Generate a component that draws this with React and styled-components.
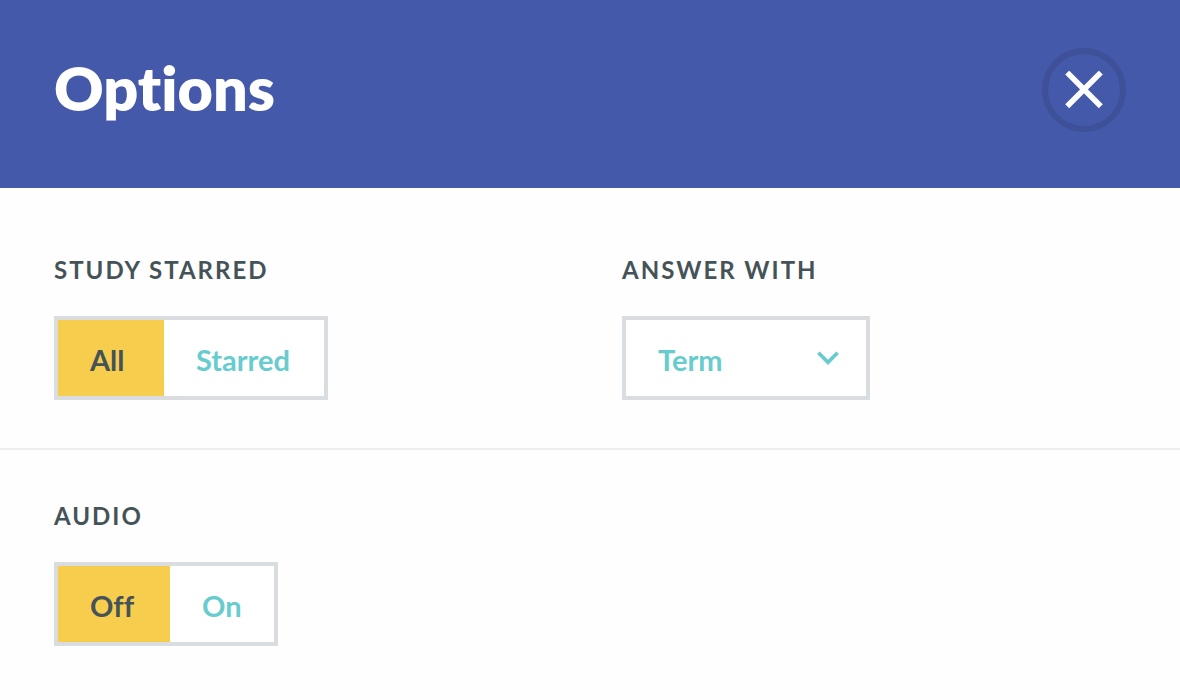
import React, { useState } from "react";
import styled, { createGlobalStyle } from "styled-components";

const GlobalStyle = createGlobalStyle`
  *, *::before, *::after { box-sizing: border-box; }
  body {
    margin: 0;
    background: #fefefe;
    color: #455358;
    font-family: Lato, "Open Sans", sans-serif;
    font-variant-ligatures: none;
  }
`;

const Header = styled.header`
  display: flex;
  align-items: center;
  justify-content: space-between;
  padding: 48px 54px 56px;
  background: #4459a9;
`;

const Title = styled.h1`
  margin: 0;
  color: #fff;
  font-size: 61px;
  font-weight: 800;
  line-height: 80px;
  padding-bottom: 4px;
`;

const CloseButton = styled.button`
  display: flex;
  align-items: center;
  justify-content: center;
  width: 84px;
  height: 84px;
  padding: 0;
  border: 6px solid #3e5098;
  border-radius: 50%;
  background: transparent;
  color: #fff;
  cursor: pointer;
`;

const Section = styled.section`
  display: grid;
  grid-template-columns: 1fr 1fr;
  column-gap: 64px;
  padding: ${(p) => (p.$first ? 70 : 54)}px 54px 48px;
  border-bottom: ${(p) => (p.$first ? "2px solid #ededef" : "none")};
`;

const Group = styled.fieldset`
  min-width: 0;
  margin: 0;
  padding: 0;
  border: 0;
`;

const Field = styled.div`
  min-width: 0;
`;

const Caption = styled.span`
  display: block;
  margin-bottom: 34px;
  font-size: 24px;
  font-weight: 700;
  line-height: 24px;
  letter-spacing: 2px;
  text-transform: uppercase;
`;

const Legend = styled.legend`
  padding: 0;
`;

const Toggle = styled.div`
  display: inline-flex;
  vertical-align: top;
  height: 84px;
  border: 4px solid #d9dde0;
  background: #fff;
`;

const Segment = styled.label`
  display: flex;
  align-items: center;
  width: ${(p) => p.$width}px;
  padding: 4px 0 0 32px;
  color: #67cccd;
  font-size: 29px;
  font-weight: 700;
  line-height: 36px;
  cursor: pointer;

  &:has(input:checked) {
    background: #f7cd4e;
    color: #455358;
  }
`;

const Radio = styled.input`
  appearance: none;
  width: 0;
  height: 0;
  margin: 0;
`;

const SelectBox = styled.div`
  display: grid;
  align-items: center;
  width: 248px;
  height: 84px;
  border: 4px solid #d9dde0;
  background: #fff;
  color: #67cccd;
`;

const Select = styled.select`
  grid-area: 1 / 1;
  appearance: none;
  width: 100%;
  height: 76px;
  padding: 4px 64px 0 32px;
  border: 0;
  background: transparent;
  color: inherit;
  font: 700 29px/36px Lato, "Open Sans", sans-serif;
  cursor: pointer;
`;

const Chevron = styled.svg`
  grid-area: 1 / 1;
  justify-self: end;
  margin-right: 27px;
  pointer-events: none;
`;

function ToggleGroup({ name, title, options }) {
  const [value, setValue] = useState(options[0].label);
  return (
    <Group>
      <Legend><Caption>{title}</Caption></Legend>
      <Toggle>
        {options.map((o) => (
          <Segment key={o.label} $width={o.width}>
            <Radio
              type="radio"
              name={name}
              value={o.label}
              checked={value === o.label}
              onChange={() => setValue(o.label)}
            />
            {o.label}
          </Segment>
        ))}
      </Toggle>
    </Group>
  );
}

export default function App() {
  return (
    <>
      <GlobalStyle />
      <Header>
        <Title>Options</Title>
        <CloseButton type="button" aria-label="Close">
          <svg width="38" height="38" viewBox="0 0 38 38" fill="none" stroke="currentColor" strokeWidth="5.6">
            <path d="M2.2 1.6 35.8 35.2M35.8 1.6 2.2 35.2" />
          </svg>
        </CloseButton>
      </Header>
      <main>
        <Section $first>
          <ToggleGroup
            name="starred"
            title="Study starred"
            options={[{ label: "All", width: 106 }, { label: "Starred", width: 160 }]}
          />
          <Field>
            <label htmlFor="answer"><Caption>Answer with</Caption></label>
            <SelectBox>
              <Select id="answer" defaultValue="Term">
                <option>Term</option>
                <option>Definition</option>
              </Select>
              <Chevron width="22" height="14" viewBox="0 0 22 14" fill="none" stroke="currentColor" strokeWidth="3.7">
                <path d="M1.4 1.7 11 11.3 20.6 1.7" />
              </Chevron>
            </SelectBox>
          </Field>
        </Section>
        <Section>
          <ToggleGroup
            name="audio"
            title="Audio"
            options={[{ label: "Off", width: 112 }, { label: "On", width: 104 }]}
          />
        </Section>
      </main>
    </>
  );
}
